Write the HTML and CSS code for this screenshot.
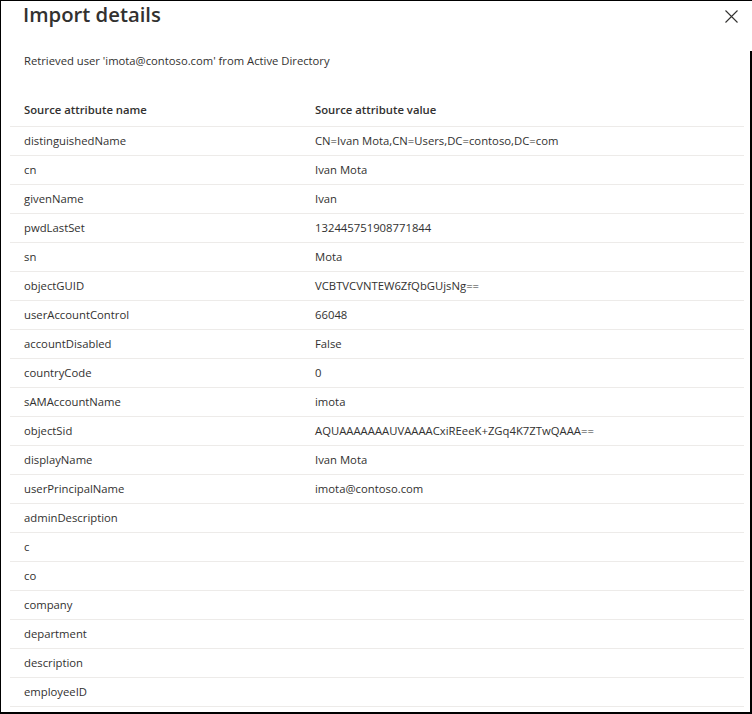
FILE: index.html
```html
<!DOCTYPE html>
<html lang="en">
<head>
<meta charset="utf-8">
<title>Import details</title>
<link rel="stylesheet" href="styles.css">
</head>
<body>
<div class="panel">
  <div class="head">
    <h1 class="title">Import details</h1>
    <button class="close" aria-label="Close">
      <svg width="13" height="13" viewBox="0 0 13 13"><path d="M0.5 0.5L12.5 12.5M12.5 0.5L0.5 12.5" stroke="#323130" stroke-width="1.1" fill="none"/></svg>
    </button>
  </div>
  <p class="sub">Retrieved user 'imota@contoso.com' from Active Directory</p>
  <table class="grid">
    <thead>
      <tr><th>Source attribute name</th><th>Source attribute value</th></tr>
    </thead>
    <tbody>
      <tr><td>distinguishedName</td><td>CN=Ivan Mota,CN=Users,DC=contoso,DC=com</td></tr>
      <tr><td>cn</td><td>Ivan Mota</td></tr>
      <tr><td>givenName</td><td>Ivan</td></tr>
      <tr><td>pwdLastSet</td><td>132445751908771844</td></tr>
      <tr><td>sn</td><td>Mota</td></tr>
      <tr><td>objectGUID</td><td>VCBTVCVNTEW6ZfQbGUjsNg==</td></tr>
      <tr><td>userAccountControl</td><td>66048</td></tr>
      <tr><td>accountDisabled</td><td>False</td></tr>
      <tr><td>countryCode</td><td>0</td></tr>
      <tr><td>sAMAccountName</td><td>imota</td></tr>
      <tr><td>objectSid</td><td>AQUAAAAAAAUVAAAACxiREeeK+ZGq4K7ZTwQAAA==</td></tr>
      <tr><td>displayName</td><td>Ivan Mota</td></tr>
      <tr><td>userPrincipalName</td><td>imota@contoso.com</td></tr>
      <tr><td>adminDescription</td><td></td></tr>
      <tr><td>c</td><td></td></tr>
      <tr><td>co</td><td></td></tr>
      <tr><td>company</td><td></td></tr>
      <tr><td>department</td><td></td></tr>
      <tr><td>description</td><td></td></tr>
      <tr><td>employeeID</td><td></td></tr>
    </tbody>
  </table>
  <div class="scrollbar"></div>
</div>
</body>
</html>
```

FILE: styles.css
```css
* { box-sizing: border-box; }
html, body { margin: 0; padding: 0; background: #fff; }
body {
  font-family: "Open Sans", "Noto Sans", sans-serif;
  color: #323130;
}
.panel {
  position: relative;
  width: 752px;
  height: 714px;
  overflow: hidden;
  border-left: 1px solid #000;
  border-top: 1px solid #000;
  border-bottom: 2px solid #000;
  padding-right: 2px;
}
.scrollbar {
  position: absolute;
  right: 0;
  top: 50px;
  bottom: 0;
  width: 2px;
  background: #000;
}
.head {
  display: flex;
  justify-content: space-between;
  align-items: flex-start;
  padding: 0 11px 0 22px;
}
.title {
  margin: 0;
  font-size: 20.3px;
  font-weight: 600;
  line-height: 27px;
}
.close {
  margin-top: 8px;
  width: 15px;
  height: 15px;
  padding: 0;
  border: 0;
  background: transparent;
  display: flex;
  align-items: center;
  justify-content: center;
}
.sub {
  margin: 25px 0 0 23px;
  font-size: 11.25px;
  line-height: 16px;
}
.grid {
  margin: 27px 0 0 9px;
  width: 734px;
  border-collapse: collapse;
  font-size: 11.3px;
}
.grid th, .grid td {
  text-align: left;
  padding: 0 14px;
  height: 29px;
  line-height: 16px;
  border-bottom: 1px solid #edebe9;
  vertical-align: middle;
}
.grid th {
  font-weight: 600;
  height: 30px;
  padding-bottom: 2px;
}
.grid th:first-child, .grid td:first-child { width: 291px; }
```
